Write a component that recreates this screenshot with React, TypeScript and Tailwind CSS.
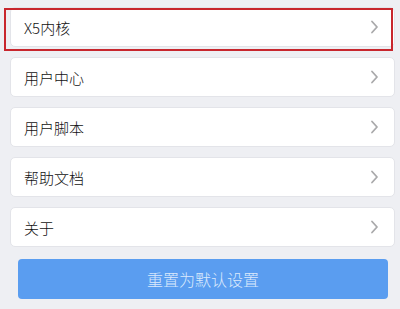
import React from 'react'

// 设置页：列表项 + 重置按钮
const items = ['X5内核', '用户中心', '用户脚本', '帮助文档', '关于']

function Chevron() {
  return (
    <svg width="9" height="14" viewBox="0 0 9 14" className="shrink-0">
      <path d="M2 1.5 L7 7 L2 12.5" fill="none" stroke="#a9a9ab" strokeWidth="1.8" strokeLinecap="round" strokeLinejoin="round" />
    </svg>
  )
}

export default function App() {
  return (
    <div
      className="relative w-[400px] h-[309px] bg-[#eeeff3] pt-[7px] pl-[10px] pr-[5px] overflow-hidden"
      style={{ fontFamily: '"Noto Sans CJK SC", "Noto Sans", sans-serif' }}
    >
      <div className="flex flex-col gap-[10px]">
        {items.map(label => (
          <div
            key={label}
            className="h-[40px] flex items-center justify-between pl-[13px] pr-[15px] bg-white rounded-[5px] border border-[#e3e4e9]"
          >
            <span className="text-[15px] font-light text-[#111111] leading-none">{label}</span>
            <Chevron />
          </div>
        ))}
      </div>
      <div className="mt-[12px] ml-[8px] mr-[7px] h-[40px] rounded-[4px] bg-[#5a9df0] flex items-center justify-center">
        <span className="text-[16px] font-light text-[#dbe9fc] leading-none">重置为默认设置</span>
      </div>
      {/* 红框高亮 */}
      <div className="absolute left-[4px] top-[8px] w-[389px] h-[43px] border-2 border-[#c8262d] pointer-events-none" />
    </div>
  )
}
